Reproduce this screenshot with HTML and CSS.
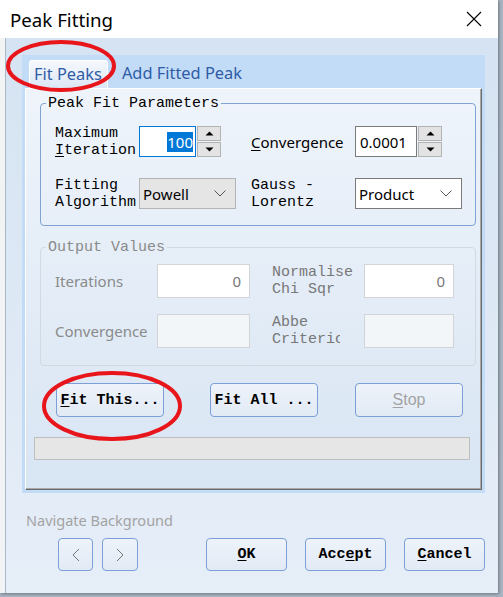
FILE: index.html
```html
<!DOCTYPE html>
<html lang="en">
<head>
  <meta charset="UTF-8">
  <link rel="stylesheet" href="styles.css">
</head>
<body>
  <div class="window">
    <div class="titlebar">
      <span class="title">Peak Fitting</span>
      <svg class="close" width="16" height="16" viewBox="0 0 16 16"><path d="M1 1 L15 15 M15 1 L1 15" stroke="#000" stroke-width="1.1" fill="none"/></svg>
    </div>
    <div class="client">
      <div class="tab-frame">
        <div class="tabs">
          <span class="tab active">Fit Peaks</span>
          <span class="tab">Add Fitted Peak</span>
        </div>
        <div class="tab-page">
          <fieldset class="group params">
            <legend>Peak Fit Parameters</legend>
            <div class="grid-params">
              <span class="mono">Maximum<br><u>I</u>teration</span>
              <div class="spin">
                <div class="edit focus w57"><span class="sel">100</span></div>
                <div class="arrows">
                  <span class="arrow"><svg width="9" height="5" viewBox="0 0 9 5"><path d="M0.5 4.5 L4.5 0.5 L8.5 4.5 Z" fill="#000"/></svg></span>
                  <span class="arrow"><svg width="9" height="5" viewBox="0 0 9 5"><path d="M0.5 0.5 L4.5 4.5 L8.5 0.5 Z" fill="#000"/></svg></span>
                </div>
              </div>
              <span class="sans"><u>C</u>onvergence</span>
              <div class="spin">
                <div class="edit w62">0.0001</div>
                <div class="arrows">
                  <span class="arrow"><svg width="9" height="5" viewBox="0 0 9 5"><path d="M0.5 4.5 L4.5 0.5 L8.5 4.5 Z" fill="#000"/></svg></span>
                  <span class="arrow"><svg width="9" height="5" viewBox="0 0 9 5"><path d="M0.5 0.5 L4.5 4.5 L8.5 0.5 Z" fill="#000"/></svg></span>
                </div>
              </div>

              <span class="mono">Fitting<br>Algorithm</span>
              <div class="combo gray w97">
                <span>Powell</span>
                <svg width="12" height="7" viewBox="0 0 12 7"><path d="M0.5 0.5 L6 6 L11.5 0.5" stroke="#555" stroke-width="1" fill="none"/></svg>
              </div>
              <span class="mono">Gauss -<br>Lorentz</span>
              <div class="combo w107">
                <span>Product</span>
                <svg width="12" height="7" viewBox="0 0 12 7"><path d="M0.5 0.5 L6 6 L11.5 0.5" stroke="#555" stroke-width="1" fill="none"/></svg>
              </div>
            </div>
          </fieldset>

          <fieldset class="group output">
            <legend>Output Values</legend>
            <div class="grid-output">
              <span class="sans dim">Iterations</span>
              <div class="box white">0</div>
              <span class="mono dim">Normalise<br>Chi Sqr</span>
              <div class="box white">0</div>

              <span class="sans dim">Convergence</span>
              <div class="box"></div>
              <span class="mono dim">Abbe<br><span class="clip">Criterion</span></span>
              <div class="box"></div>
            </div>
          </fieldset>

          <div class="actions">
            <button class="btn mono strong"><u>F</u>it This...</button>
            <button class="btn mono strong">Fit All ...</button>
            <button class="btn sans disabled"><u>S</u>top</button>
          </div>

          <div class="progress"></div>
        </div>
      </div>

      <div class="nav-label">Navigate Background</div>

      <div class="footer">
        <div class="nav">
          <button class="btn nav-btn"><svg width="8" height="14" viewBox="0 0 8 14"><path d="M7 1 L1 7 L7 13" stroke="#777" stroke-width="1" fill="none"/></svg></button>
          <button class="btn nav-btn wide"><svg width="8" height="14" viewBox="0 0 8 14"><path d="M1 1 L7 7 L1 13" stroke="#777" stroke-width="1" fill="none"/></svg></button>
        </div>
        <div class="dialog-btns">
          <button class="btn mono strong"><u>O</u>K</button>
          <button class="btn mono strong">Acc<u>e</u>pt</button>
          <button class="btn mono strong"><u>C</u>ancel</button>
        </div>
      </div>
    </div>
  </div>

  <svg class="marks" width="503" height="597" viewBox="0 0 503 597">
    <ellipse cx="61" cy="66" rx="53" ry="24" stroke="#e8151b" stroke-width="4" fill="none"/>
    <ellipse cx="112" cy="406" rx="68" ry="33" stroke="#e8151b" stroke-width="4" fill="none"/>
  </svg>
</body>
</html>
```

FILE: styles.css
```css
body {
  margin: 0;
  width: 503px;
  height: 597px;
  background: #a9b5c3;
  position: relative;
  overflow: hidden;
  font-family: "Noto Sans", sans-serif;
}

.window {
  width: 498px;
  height: 593px;
  background: #f1f3f5;
  display: flex;
  flex-direction: column;
  box-shadow: 1px 1px 3px rgba(0, 0, 0, 0.35);
}

.titlebar {
  height: 38px;
  background: #fff;
  display: flex;
  align-items: center;
  justify-content: space-between;
  padding: 0 16px 0 10px;
  flex-shrink: 0;
}

.title {
  font-size: 18.7px;
  color: #000;
}

.client {
  flex: 1;
  margin-left: 5px;
  border-left: 1px solid #a9b8c9;
  background: linear-gradient(#d5e3f2, #e6eef8);
  display: flex;
  flex-direction: column;
  padding-right: 13px;
}

.tab-frame {
  margin: 17px 0 0 16px;
  height: 438px;
  box-sizing: border-box;
  background: #c2dbf7;
  padding: 0 3px 3px 3px;
  display: flex;
  flex-direction: column;
}

.tabs {
  height: 33px;
  display: flex;
  align-items: flex-end;
  padding-left: 4px;
  gap: 10px;
}

.tab {
  font-size: 16.4px;
  color: #2f5ca6;
  height: 28px;
  line-height: 26px;
  padding: 0 5px 0 4px;
  box-sizing: border-box;
}

.tab.active {
  background: linear-gradient(#f5f8fd, #dce7f5);
  border: 1px solid #fff;
  border-bottom: none;
  border-radius: 3px 3px 0 0;
}

.tab-page {
  flex: 1;
  background: linear-gradient(#eff4fb, #d8e5f3);
  border-top: 1px solid #fff;
  border-left: 1px solid #fff;
  border-right: 1px solid #6b6b6b;
  border-bottom: 1px solid #6b6b6b;
  box-shadow: inset -1px -1px 0 #a8a8a8;
  padding: 6px 5px 0 14px;
  display: flex;
  flex-direction: column;
}

.mono {
  font-family: "Liberation Mono", monospace;
  font-size: 15px;
  line-height: 17px;
  color: #000;
}

.mono.strong {
  font-weight: bold;
}

.sans {
  font-size: 15px;
  color: #000;
}

.dim {
  color: #8a8a8a;
}

.mono.dim {
  color: #777;
}

u {
  text-decoration-thickness: 1px;
  text-underline-offset: 2px;
}

.group {
  margin: 0;
  border-radius: 4px;
  min-width: 0;
}

.group legend {
  font-family: "Liberation Mono", monospace;
  font-size: 15px;
  line-height: 17px;
  padding: 0 2px;
  margin-left: -9px;
}

.params {
  border: 1px solid #7fa3d3;
  padding: 14px 0 16px 14px;
}

.params legend {
  color: #000;
}

.output {
  margin-top: 13px;
  border: 1px solid #d3d9e1;
  padding: 8px 0 17px 14px;
}

.output legend {
  color: #8a8a8a;
}

.grid-params {
  display: grid;
  grid-template-columns: 84px 112px 104px auto;
  grid-auto-rows: 31px;
  row-gap: 21px;
  align-items: center;
}

.grid-output {
  display: grid;
  grid-template-columns: 102px 115px 92px 90px;
  grid-auto-rows: 34px;
  row-gap: 16px;
  align-items: center;
}

.spin {
  display: flex;
  height: 31px;
  gap: 1px;
}

.edit {
  box-sizing: border-box;
  height: 31px;
  border: 1px solid #7a7a7a;
  background: #fff;
  font-size: 15px;
  display: flex;
  align-items: center;
  padding: 0 4px;
}

.edit.focus {
  border-color: #0078d7;
  justify-content: flex-end;
  padding-right: 2px;
}

.sel {
  background: #0078d7;
  color: #fff;
  line-height: 20px;
}

.w57 { width: 57px; }
.w62 { width: 62px; }
.w97 { width: 97px; }
.w107 { width: 107px; }

.arrows {
  width: 24px;
  display: flex;
  flex-direction: column;
  gap: 1px;
}

.arrow {
  flex: 1;
  background: #e3e3e3;
  border: 1px solid #b3b3b3;
  display: flex;
  align-items: center;
  justify-content: center;
}

.combo {
  box-sizing: border-box;
  height: 31px;
  border: 1px solid #7a7a7a;
  background: #fff;
  font-size: 15px;
  display: flex;
  align-items: center;
  justify-content: space-between;
  padding: 0 9px 0 3px;
}

.combo.gray {
  background: #e5e5e5;
  border-color: #b4b4b4;
}

.box {
  box-sizing: border-box;
  height: 34px;
  width: 93px;
  border: 1px solid #d2d4d8;
  background: #f3f6f9;
  font-size: 15px;
  color: #777;
  text-align: right;
  line-height: 32px;
  padding-right: 8px;
}

.box.white {
  background: #fff;
}

.grid-output .box:nth-child(4),
.grid-output .box:nth-child(8) {
  width: 90px;
}

.clip {
  display: inline-block;
  width: 68px;
  overflow: hidden;
  white-space: nowrap;
  vertical-align: top;
}

.btn {
  box-sizing: border-box;
  height: 34px;
  border: 1px solid #7b9fd6;
  border-radius: 4px;
  background: linear-gradient(#eef3fa, #e2eaf5);
  padding: 0;
  display: flex;
  align-items: center;
  justify-content: center;
}

.btn.sans {
  font-size: 16px;
}

.btn.disabled {
  color: #a3a3a3;
}

.actions {
  margin-top: 17px;
  padding-left: 16px;
  display: grid;
  grid-template-columns: 154px 145px 108px;
}

.actions .btn {
  width: 108px;
}

.progress {
  margin: 20px 0 0 -6px;
  width: 436px;
  height: 23px;
  box-sizing: border-box;
  background: #e6e6e6;
  border: 1px solid #bfbfbf;
}

.nav-label {
  margin: 17px 0 0 20px;
  font-size: 14.5px;
  line-height: 20px;
  color: #a3a3a3;
}

.footer {
  margin-top: 8px;
  display: flex;
  align-items: center;
}

.nav {
  margin-left: 52px;
  display: flex;
  gap: 9px;
}

.nav-btn {
  width: 35px;
  height: 33px;
}

.nav-btn.wide {
  width: 36px;
}

.dialog-btns {
  margin-left: auto;
  display: flex;
  gap: 18px;
}

.dialog-btns .btn {
  width: 81px;
  height: 33px;
}

.marks {
  position: absolute;
  top: 0;
  left: 0;
  pointer-events: none;
}
```
